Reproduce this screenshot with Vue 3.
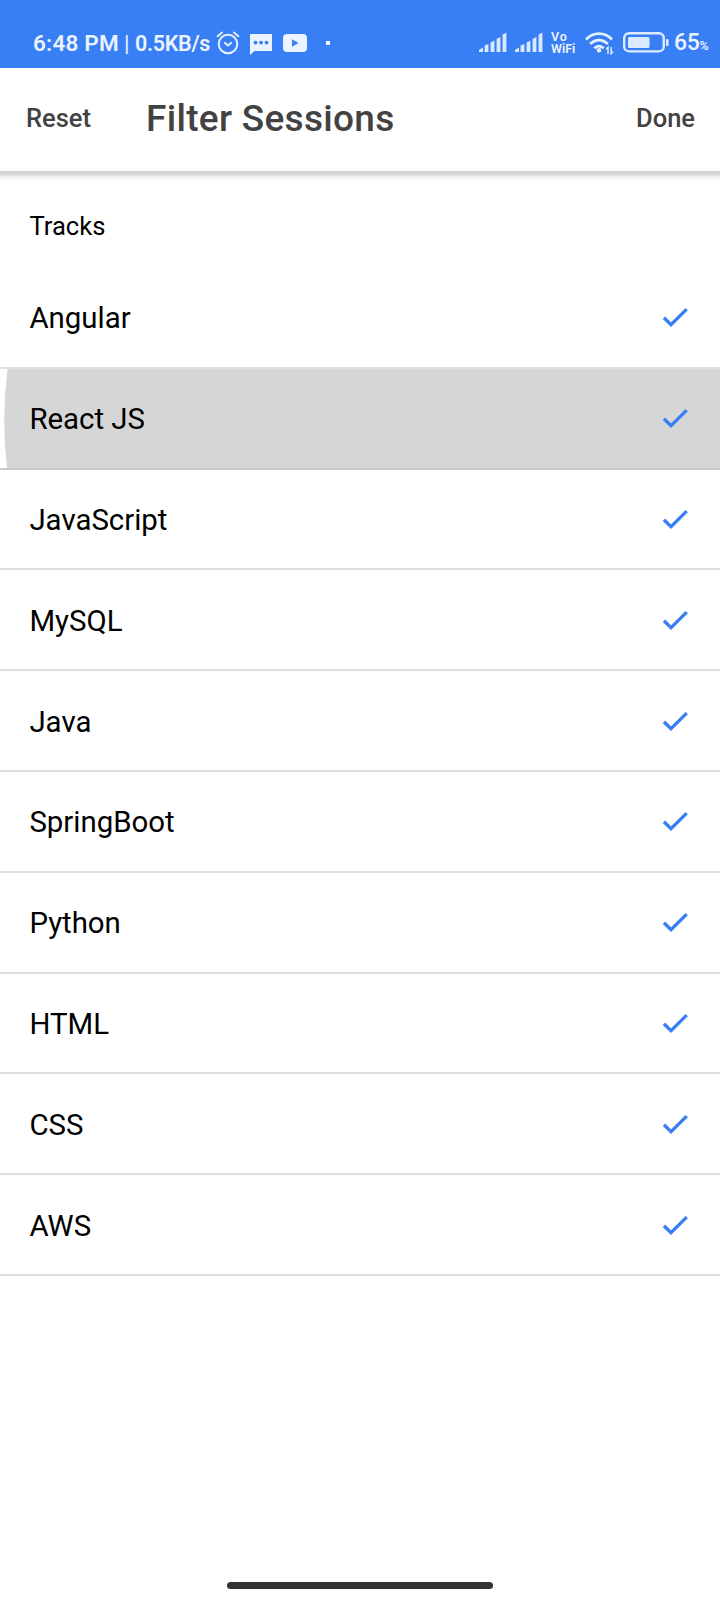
<script setup>
const tracks = [
  'Angular', 'React JS', 'JavaScript', 'MySQL', 'Java',
  'SpringBoot', 'Python', 'HTML', 'CSS', 'AWS',
].map((name) => ({ name, checked: true, pressed: name === 'React JS' }))
</script>

<template>
  <div class="screen">
    <div class="status">
      <span class="time">6:48 PM</span>
      <span class="bar">|</span>
      <span class="rate">0.5KB/s</span>
      <svg class="alarm" width="24" height="24" viewBox="0 0 24 24" fill="none" stroke="#e4f0ff" stroke-width="2" stroke-linecap="round">
        <circle cx="12" cy="13" r="9.3" />
        <path d="M1.6 5.2 6 1.6M22.4 5.2 18 1.6" />
        <path d="M8.8 11.8 12 14.5 15.3 11.8" stroke-linejoin="round" />
      </svg>
      <svg class="chat" width="22" height="21" viewBox="0 0 22 21" fill="#eaf3ff">
        <path d="M0 0H22V17H4.5L0 21Z" />
        <g fill="#387ef5"><circle cx="5.5" cy="8.6" r="1.9" /><circle cx="11" cy="8.6" r="1.9" /><circle cx="16.5" cy="8.6" r="1.9" /></g>
      </svg>
      <svg class="video" width="24" height="18" viewBox="0 0 24 18">
        <rect width="24" height="18" rx="4" fill="#eaf3ff" />
        <path d="M9 5.2V12.8L15.5 9Z" fill="#387ef5" />
      </svg>
      <span class="dot"></span>
      <span class="spacer"></span>
      <svg v-for="n in 2" :key="n" class="signal" width="28" height="20" viewBox="0 0 28 20" fill="#d9e9ff">
        <path d="M0 20V18L4 15.5V20ZM5.6 20V13.5L9.4 12V20ZM11.6 20V10.5L15.4 8.5V20ZM17.6 20V7L21.4 5V20ZM23.6 20V2.5L27.4 .5V20Z" />
      </svg>
      <span class="vowifi"><b class="vo">Vo</b><b>WiFi</b></span>
      <svg class="wifi" width="29" height="23" viewBox="0 0 29 23" fill="none" stroke="#e4f0ff" stroke-width="2.8">
        <path d="M1 7.4C8.5-.3 19.5-.3 27 7.4M5.2 12C10.6 6.7 17.4 6.7 22.8 12M9.3 16.3C12.2 13.4 15.8 13.4 18.7 16.3" />
        <circle cx="14" cy="18.3" r="2.3" fill="#e4f0ff" stroke="none" />
        <path d="M23 22V15.3L21.4 17.3M26.1 15V21.8L27.9 19.6" stroke-width="1.4" />
      </svg>
      <svg class="battery" width="46" height="21" viewBox="0 0 46 21">
        <rect x="1.2" y="1.2" width="39.6" height="18.2" rx="5" fill="none" stroke="#dcebff" stroke-width="2.4" />
        <rect x="5" y="5" width="21.5" height="11" rx="1.5" fill="#dcebff" />
        <rect x="43" y="7" width="2.6" height="7" rx="1" fill="#dcebff" />
      </svg>
      <span class="percent">65<small>%</small></span>
    </div>

    <header class="toolbar">
      <span class="action reset">Reset</span>
      <h1>Filter Sessions</h1>
      <span class="action">Done</span>
    </header>

    <main>
      <h2>Tracks</h2>
      <div v-for="track in tracks" :key="track.name" class="row" :class="{ pressed: track.pressed }">
        <svg v-if="track.pressed" class="ripple" width="8" height="99" viewBox="0 0 8 99">
          <path d="M0 0H7.5Q1.2 50 7 99H0Z" fill="#fff" />
        </svg>
        <span class="name">{{ track.name }}</span>
        <svg v-if="track.checked" class="check" width="26" height="20" viewBox="0 0 26 20" fill="none" stroke="#387ef5" stroke-width="3.3">
          <path d="M1 9.8 8 16.7 23.7 1.2" />
        </svg>
      </div>
    </main>
    <div class="home"></div>
  </div>
</template>

<style>
body { margin: 0; background: #fff; }
</style>

<style scoped>
.screen {
  position: relative;
  width: 720px;
  height: 1600px;
  overflow: hidden;
  background: #fff;
  color: #000;
  font-family: Roboto, "Noto Sans", sans-serif;
}
.status {
  box-sizing: border-box;
  height: 68px;
  padding: 18px 10px 0 33px;
  display: flex;
  align-items: center;
  background: #387ef5;
  color: #eaf3ff;
  font-size: 22.5px;
  font-weight: 600;
  line-height: 52px;
  white-space: nowrap;
}
.time { width: 91px; letter-spacing: .2px; }
.bar { width: 11px; font-weight: 400; }
.rate { width: 81px; padding-top: 1px; font-size: 21.5px; letter-spacing: -.3px; }
.alarm { flex: none; }
.chat { flex: none; margin: 3px 0 0 10px; }
.video { margin-left: 11px; }
.dot { width: 4px; height: 4px; margin-left: 19px; background: #fff; border-radius: 1px; }
.spacer { flex: 1; }
.signal { flex: none; margin: -2px 8px 0 0; }
.vowifi { width: 34px; display: flex; flex-direction: column; font-size: 12.5px; line-height: 12px; }
.vowifi b { font-weight: 600; }
.vowifi .vo { letter-spacing: .8px; }
.wifi { flex: none; margin-right: 9px; }
.battery { flex: none; margin: -1px 5px 0 0; }
.percent { width: 36px; padding-top: 3px; font-size: 23px; letter-spacing: -.3px; font-weight: 500; }
.percent small { font-size: 12.5px; font-weight: 600; }
.toolbar {
  position: relative;
  box-sizing: border-box;
  height: 102px;
  padding: 0 25px 2px 26px;
  display: flex;
  align-items: center;
  color: #424242;
}
.toolbar::after {
  content: "";
  position: absolute;
  left: 0;
  right: 0;
  top: 102.5px;
  height: 10px;
  background: linear-gradient(#d0d0d0, #d6d6d6 30%, #f0f0f0 58%, #fff);
}
.action { font-size: 25.5px; font-weight: 500; }
.reset { width: 120px; }
h1 { flex: 1; margin: 0; font-size: 37px; font-weight: 500; letter-spacing: .3px; }
h2 { height: 98px; margin: 0; padding: 6px 29.4px 0; box-sizing: border-box; line-height: 100px; font-size: 25.6px; font-weight: 400; }
.row {
  position: relative;
  box-sizing: border-box;
  height: 100.8px;
  padding: 2px 31.4px 0 29.4px;
  display: flex;
  align-items: center;
  justify-content: space-between;
  border-bottom: 2px solid #dedede;
  font-size: 29.4px;
}
.pressed { background: #d6d6d6; border-bottom-color: #c9c9c9; }
.ripple { position: absolute; left: 0; top: 0; }
.name, .check { position: relative; }
.home { position: absolute; left: 227px; top: 1582px; width: 266px; height: 7px; border-radius: 4px; background: #333; }
</style>
